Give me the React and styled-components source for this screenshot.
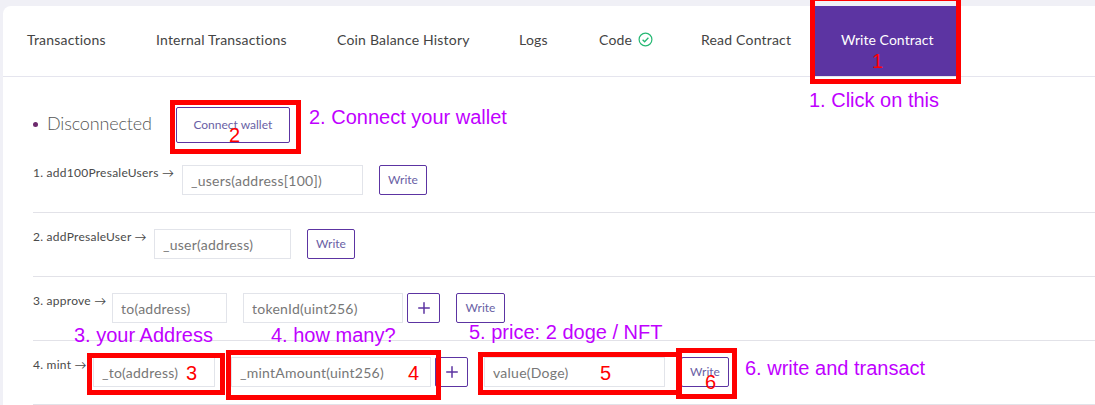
import styled, { createGlobalStyle } from 'styled-components'
import { Plus } from 'lucide-react'

const GlobalStyle = createGlobalStyle`
	html, body {
		margin: 0;
		padding: 0;
		background: #f0f0f6;
	}
`

const Page = styled.div`
	position: relative;
	width: 1095px;
	height: 405px;
	overflow: hidden;
	padding: 6px 0 0 3px;
	box-sizing: border-box;
	font-family: Lato, 'Noto Sans', sans-serif;
	color: #333;
`

const Card = styled.div`
	background: #fff;
	border-radius: 8px 0 0 0;
	height: 100%;
`

const Tabs = styled.div`
	display: flex;
	height: 70px;
	border-bottom: 1px solid #e5e5ee;
`

const Tab = styled.div`
	display: flex;
	align-items: center;
	gap: 6px;
	width: ${(p) => p.$width}px;
	padding: 0 0 4px ${(p) => (p.$active ? 26 : 24)}px;
	box-sizing: border-box;
	font-size: 14px;
	letter-spacing: ${(p) => (p.$active ? 0.05 : 0.2)}px;
	color: ${(p) => (p.$active ? '#fff' : '#444')};
	background: ${(p) => (p.$active ? '#5c34a2' : 'transparent')};
`

const Body = styled.div`
	padding: 30px 0 0 30px;
`

const Status = styled.div`
	display: flex;
	align-items: center;
	height: 36px;
	margin-bottom: 22px;
`

const Dot = styled.span`
	width: 5px;
	height: 5px;
	border-radius: 50%;
	background: #6d2a6d;
	margin: 0 9px 2px 0;
`

const StatusText = styled.span`
	font-size: 18px;
	font-weight: 300;
	letter-spacing: -0.15px;
	color: #555;
	margin: 0 24px 5px 0;
`

const OutlineButton = styled.button`
	display: flex;
	align-items: center;
	justify-content: center;
	font-family: inherit;
	font-size: 12px;
	color: #6a5fa5;
	background: #fff;
	border: 1px solid #5c34a2;
	border-radius: 2px;
	padding: 0 0 1px;
	width: ${(p) => p.$width}px;
	height: ${(p) => p.$height || 30}px;
`

const PlusButton = styled(OutlineButton)`
	width: 33px;
	margin-left: -12px;
	padding: 0;
	color: #5c34a2;
`

const Rows = styled.div`
	display: flex;
	flex-direction: column;
`

const Row = styled.div`
	display: flex;
	align-items: flex-start;
	gap: 16px;
	padding: 16px 0 17px;
	border-bottom: 1px solid #e2e2e8;
	&:first-child {
		padding-top: 0;
	}
`

const Label = styled.div`
	width: ${(p) => p.$width}px;
	margin-right: -8px;
	font-size: 12px;
	line-height: 16px;
	letter-spacing: 0.25px;
	color: #4a4a4a;
	white-space: nowrap;
`

const Field = styled.input`
	box-sizing: border-box;
	width: ${(p) => p.$width}px;
	height: 30px;
	padding: 0 8px;
	font-family: inherit;
	font-size: 14px;
	letter-spacing: 0.25px;
	background: #fff;
	border: 1px solid #e2e4ea;
	outline: none;
	&::placeholder {
		color: #777;
		opacity: 1;
	}
`

const Marker = styled.div`
	position: absolute;
	left: ${(p) => p.$left}px;
	top: ${(p) => p.$top}px;
	width: ${(p) => p.$width}px;
	height: ${(p) => p.$height}px;
	box-sizing: border-box;
	border: 5px solid #f00;
`

const Note = styled.span`
	position: absolute;
	left: ${(p) => p.$left}px;
	top: ${(p) => p.$top}px;
	font-family: 'Liberation Sans', Arial, sans-serif;
	font-size: 20px;
	line-height: 24px;
	white-space: nowrap;
	color: ${(p) => (p.$step ? '#f00' : '#c000ff')};
`

const CheckIcon = () => (
	<svg width='15' height='15' viewBox='0 0 15 15' fill='none'>
		<circle cx='7.5' cy='7.5' r='6.4' stroke='#25b873' strokeWidth='1.2' />
		<path d='M4.6 7.7l2 2 3.8-3.9' stroke='#25b873' strokeWidth='1.3' />
	</svg>
)

const tabs = [
	{ name: 'Transactions', width: 129 },
	{ name: 'Internal Transactions', width: 181 },
	{ name: 'Coin Balance History', width: 182 },
	{ name: 'Logs', width: 80 },
	{ name: 'Code', width: 102, check: true },
	{ name: 'Read Contract', width: 138 },
	{ name: 'Write Contract', width: 141, active: true },
]

const rows = [
	{
		label: '1. add100PresaleUsers →',
		labelWidth: 141,
		fields: [{ name: '_users(address[100])', width: 181 }],
		write: 48,
	},
	{
		label: '2. addPresaleUser →',
		labelWidth: 113,
		fields: [{ name: '_user(address)', width: 137 }],
		write: 48,
	},
	{
		label: '3. approve →',
		labelWidth: 71,
		fields: [
			{ name: 'to(address)', width: 115 },
			{ name: 'tokenId(uint256)', width: 160 },
		],
		plus: true,
		write: 49,
	},
	{
		label: '4. mint →',
		labelWidth: 52,
		fields: [
			{ name: '_to(address)', width: 122 },
			{ name: '_mintAmount(uint256)', width: 200 },
		],
		plus: true,
		extra: { name: 'value(Doge)', width: 181 },
		write: 48,
	},
]

// the red frames and purple instructions painted over the screenshot
const markers = [
	{ left: 810, top: -4, width: 151, height: 88 },
	{ left: 170, top: 100, width: 131, height: 54 },
	{ left: 87, top: 353, width: 138, height: 42 },
	{ left: 226, top: 350, width: 215, height: 50 },
	{ left: 478, top: 352, width: 204, height: 43 },
	{ left: 676, top: 348, width: 61, height: 51 },
]

const notes = [
	{ text: '1. Click on this', left: 809, top: 88 },
	{ text: '2. Connect your wallet', left: 309, top: 105 },
	{ text: '3. your Address', left: 74, top: 323 },
	{ text: '4. how many?', left: 271, top: 323 },
	{ text: '5. price: 2 doge / NFT', left: 469, top: 320 },
	{ text: '6. write and transact', left: 745, top: 356 },
	{ text: '1', left: 872, top: 49, step: true },
	{ text: '2', left: 229, top: 123, step: true },
	{ text: '3', left: 186, top: 361, step: true },
	{ text: '4', left: 408, top: 361, step: true },
	{ text: '5', left: 600, top: 361, step: true },
	{ text: '6', left: 705, top: 370, step: true },
]

const App = () => (
	<Page>
		<GlobalStyle />
		<Card>
			<Tabs>
				{tabs.map((tab) => (
					<Tab key={tab.name} $width={tab.width} $active={tab.active}>
						{tab.name}
						{tab.check && <CheckIcon />}
					</Tab>
				))}
			</Tabs>
			<Body>
				<Status>
					<Dot />
					<StatusText>Disconnected</StatusText>
					<OutlineButton $width={114} $height={36}>
						Connect wallet
					</OutlineButton>
				</Status>
				<Rows>
					{rows.map((row) => (
						<Row key={row.label}>
							<Label $width={row.labelWidth}>{row.label}</Label>
							{row.fields.map((field) => (
								<Field key={field.name} $width={field.width} placeholder={field.name} />
							))}
							{row.plus && (
								<PlusButton>
									<Plus size={18} strokeWidth={2} />
								</PlusButton>
							)}
							{row.extra && <Field $width={row.extra.width} placeholder={row.extra.name} />}
							<OutlineButton $width={row.write}>Write</OutlineButton>
						</Row>
					))}
				</Rows>
			</Body>
		</Card>

		{markers.map((m) => (
			<Marker key={m.left} $left={m.left} $top={m.top} $width={m.width} $height={m.height} />
		))}
		{notes.map((n) => (
			<Note key={n.text} $left={n.left} $top={n.top} $step={n.step}>
				{n.text}
			</Note>
		))}
	</Page>
)

export default App
